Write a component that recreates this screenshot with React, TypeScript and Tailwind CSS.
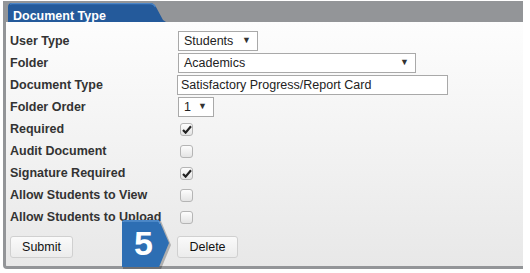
import React from "react";

const rows: { label: string; kind: "select" | "text" | "check"; value?: string; width?: string; checked?: boolean }[] = [
  { label: "User Type", kind: "select", value: "Students", width: "w-[80px]" },
  { label: "Folder", kind: "select", value: "Academics", width: "w-[238px]" },
  { label: "Document Type", kind: "text", value: "Satisfactory Progress/Report Card" },
  { label: "Folder Order", kind: "select", value: "1", width: "w-[36px]" },
  { label: "Required", kind: "check", checked: true },
  { label: "Audit Document", kind: "check" },
  { label: "Signature Required", kind: "check", checked: true },
  { label: "Allow Students to View", kind: "check" },
  { label: "Allow Students to Upload", kind: "check" },
];

function Select({ value, width }: { value: string; width?: string }) {
  return (
    <div className={`${width} h-[20px] border border-[#a9a9a9] bg-white flex items-center justify-between pl-[5px] pr-[6px] text-[12.5px] text-[#222]`}>
      <span>{value}</span>
      <span className="text-[9px] text-[#333]">▼</span>
    </div>
  );
}

function Check({ checked }: { checked?: boolean }) {
  return (
    <div className="ml-[2px] w-[13px] h-[13px] rounded-[3px] border border-[#b5b5b5] bg-gradient-to-b from-[#fdfdfd] to-[#e4e4e4] flex items-center justify-center">
      {checked && (
        <svg width="10" height="9" viewBox="0 0 10 9">
          <path d="M1 5 L3.6 7.6 L9 1.2" fill="none" stroke="#222" strokeWidth="2.2" />
        </svg>
      )}
    </div>
  );
}

function Button({ label, width }: { label: string; width: string }) {
  return (
    <div className={`${width} h-[22px] rounded-[3px] border border-[#d0d0d0] bg-gradient-to-b from-[#fafafa] to-[#ececec] flex items-center justify-center text-[12.5px] text-[#111]`}>
      {label}
    </div>
  );
}

export default function App() {
  return (
    <div className="w-[530px] h-[273px] bg-white relative overflow-hidden font-['Liberation_Sans',Arial,sans-serif]">
      <div className="ml-[3px] mt-[1px] w-[520px] h-[268px] border-l-[3px] border-b-[3px] border-[#939598] rounded-bl-[4px] bg-gradient-to-b from-white to-[#e8e8e8] flex flex-col">
        {/* header bar with tab */}
        <div className="h-[21px] bg-[#939598] -ml-[3px] pl-[5px] pt-[2px] flex">
          <div className="relative w-[160px] h-[19px]">
            <svg className="absolute inset-0" width="160" height="19" viewBox="0 0 160 19">
              <path d="M0 19 L0 4 Q0 0 4 0 L142 0 Q146 0 148 4 L155 17 L158 19 Z" fill="#245a9b" />
              <path d="M2 1.2 Q3 0.6 4 0.6 L142 0.6 Q145.5 0.6 147.4 4" fill="none" stroke="#4b86c9" strokeWidth="1.2" />
            </svg>
            <span className="relative pl-[5px] text-[12.5px] font-bold text-white leading-[19px]">Document Type</span>
          </div>
        </div>

        {/* form rows */}
        <div className="pt-[8px] pl-[4px] flex flex-col">
          {rows.map((r) => (
            <div key={r.label} className="h-[22px] flex items-center">
              <div className="w-[168px] text-[12.5px] font-bold text-[#333]">{r.label}</div>
              {r.kind === "select" && <Select value={r.value!} width={r.width} />}
              {r.kind === "text" && (
                <div className="-ml-[1px] w-[271px] h-[20px] border border-[#a9a9a9] bg-white pl-[3px] text-[12.5px] text-[#222] leading-[18px]">
                  {r.value}
                </div>
              )}
              {r.kind === "check" && <Check checked={r.checked} />}
            </div>
          ))}
          <div className="mt-[8px] flex">
            <Button label="Submit" width="w-[63px]" />
            <div className="w-[104px]" />
            <Button label="Delete" width="w-[61px]" />
          </div>
        </div>
      </div>

      {/* step badge */}
      <div className="absolute left-[121px] top-[219px] w-[50px] h-[50px]">
        <svg className="absolute inset-0" width="50" height="50" viewBox="0 0 50 50">
          <path d="M1 3 Q1 1 3 1 L39 1 L49 25 L39 49 L1 49 Z" fill="#000" opacity="0.25" transform="translate(1 1)" />
          <path d="M1 3 Q1 1 3 1 L38 1 L48 24 L38 48 L1 48 Z" fill="#2d6eb3" />
          <path d="M2 3 Q2 2 3 2 L37.5 2 L39 5" fill="none" stroke="#6aa0da" strokeWidth="1" />
        </svg>
        <span className="absolute left-[13px] top-[5px] text-[34px] leading-[38px] font-bold text-white">5</span>
      </div>
    </div>
  );
}
